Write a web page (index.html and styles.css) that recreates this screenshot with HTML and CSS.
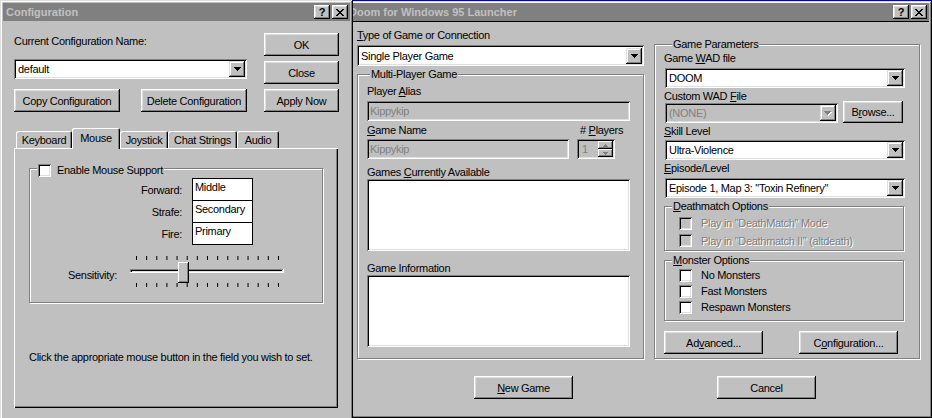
FILE: index.html
```html
<!DOCTYPE html>
<html lang="en">
<head>
  <meta charset="UTF-8">
  <meta name="viewport" content="width=device-width, initial-scale=1.0">
  <title>Doom for Windows 95 Launcher</title>
  <link rel="stylesheet" href="styles.css">
</head>
<body>
<div class="desktop">

  <!-- Launcher (behind) -->
  <div class="window launcher-window">
    <div class="title-bar">
      <span class="title-text launcher-title">Doom for Windows 95 Launcher</span>
      <div class="title-buttons">
        <span class="title-btn help-btn">?</span>
        <span class="title-btn"><svg width="8" height="7" viewBox="0 0 8 7"><path d="M0 0h2v1H0zM6 0h2v1H6zM1 1h2v1H1zM5 1h2v1H5zM2 2h4v1H2zM3 3h2v1H3zM2 4h4v1H2zM1 5h2v1H1zM5 5h2v1H5zM0 6h2v1H0zM6 6h2v1H6z"/></svg></span>
      </div>
    </div>
    <div class="launcher-body">
      <div class="launcher-columns">
        <div class="launcher-left">
          <div class="field-label type-label"><u>T</u>ype of Game or Connection</div>
          <div class="field combo type-combo">
            <span class="combo-text">Single Player Game</span>
            <span class="combo-arrow"><svg width="7" height="4" viewBox="0 0 7 4"><path d="M0 0h7v1H0zM1 1h5v1H1zM2 2h3v1H2zM3 3h1v1H3z"/></svg></span>
          </div>
          <div class="group multi-group">
            <div class="group-title multi-title">Multi-Player Game</div>
            <div class="field-label alias-label">Player <u>A</u>lias</div>
            <div class="field disabled alias-input">Kippykip</div>
            <div class="name-row">
              <div class="name-col">
                <div class="field-label"><u>G</u>ame Name</div>
                <div class="field disabled name-input">Kippykip</div>
              </div>
              <div class="players-col">
                <div class="field-label players-label"># <u>P</u>layers</div>
                <div class="field disabled spinner">
                  <span class="spinner-value">1</span>
                  <span class="spinner-buttons">
                    <span class="spin-btn"><svg width="5" height="3" viewBox="0 0 5 3"><path d="M2 0h1v1h1v1h1v1H0V2h1V1h1z"/></svg></span>
                    <span class="spin-btn"><svg width="5" height="3" viewBox="0 0 5 3"><path d="M0 0h5v1H4v1H3v1H2V2H1V1H0z"/></svg></span>
                  </span>
                </div>
              </div>
            </div>
            <div class="field-label games-label">Games <u>C</u>urrently Available</div>
            <div class="field list-box"></div>
            <div class="field-label info-label">Game Information</div>
            <div class="field list-box"></div>
          </div>
        </div>

        <div class="launcher-right">
          <div class="group params-group">
            <div class="group-title params-title">Game Parameters</div>
            <div class="field-label">Game <u>W</u>AD file</div>
            <div class="field combo param-combo wad-combo">
              <span class="combo-text">DOOM</span>
              <span class="combo-arrow"><svg width="7" height="4" viewBox="0 0 7 4"><path d="M0 0h7v1H0zM1 1h5v1H1zM2 2h3v1H2zM3 3h1v1H3z"/></svg></span>
            </div>
            <div class="field-label custom-label">Custom WAD <u>F</u>ile</div>
            <div class="custom-row">
              <div class="field combo disabled custom-combo">
                <span class="combo-text">(NONE)</span>
                <span class="combo-arrow"><svg width="8" height="5" viewBox="0 0 8 5"><path fill="#fff" d="M1 1h7v1H1zM2 2h5v1H2zM3 3h3v1H3zM4 4h1v1H4z"/><path fill="#808080" d="M0 0h7v1H0zM1 1h5v1H1zM2 2h3v1H2zM3 3h1v1H3z"/></svg></span>
              </div>
              <button class="btn browse-btn">B<u>r</u>owse...</button>
            </div>
            <div class="field-label skill-label"><u>S</u>kill Level</div>
            <div class="field combo param-combo skill-combo">
              <span class="combo-text">Ultra-Violence</span>
              <span class="combo-arrow"><svg width="7" height="4" viewBox="0 0 7 4"><path d="M0 0h7v1H0zM1 1h5v1H1zM2 2h3v1H2zM3 3h1v1H3z"/></svg></span>
            </div>
            <div class="field-label skill-label"><u>E</u>pisode/Level</div>
            <div class="field combo param-combo episode-combo">
              <span class="combo-text">Episode 1, Map 3: "Toxin Refinery"</span>
              <span class="combo-arrow"><svg width="7" height="4" viewBox="0 0 7 4"><path d="M0 0h7v1H0zM1 1h5v1H1zM2 2h3v1H2zM3 3h1v1H3z"/></svg></span>
            </div>

            <div class="group option-group deathmatch-group">
              <div class="group-title"><u>D</u>eathmatch Options</div>
              <div class="check-row dm-row-first">
                <span class="check disabled"></span>
                <span class="disabled-text">Play in "DeathMatch" Mode</span>
              </div>
              <div class="check-row dm-row-second">
                <span class="check disabled"></span>
                <span class="disabled-text">Play in "Deathmatch II" (altdeath)</span>
              </div>
            </div>

            <div class="group option-group monster-group">
              <div class="group-title"><u>M</u>onster Options</div>
              <div class="check-row monster-row"><span class="check"></span><span>No Monsters</span></div>
              <div class="check-row monster-row"><span class="check"></span><span>Fast Monsters</span></div>
              <div class="check-row monster-row"><span class="check"></span><span>Respawn Monsters</span></div>
            </div>

            <div class="param-buttons">
              <button class="btn param-btn">Ad<u>v</u>anced...</button>
              <button class="btn param-btn">C<u>o</u>nfiguration...</button>
            </div>
          </div>
        </div>
      </div>

      <div class="launcher-footer">
        <button class="btn footer-btn"><u>N</u>ew Game</button>
        <button class="btn footer-btn">Cancel</button>
      </div>
    </div>
  </div>

  <!-- Configuration (on top) -->
  <div class="window config-window">
    <div class="title-bar">
      <span class="title-text">Configuration</span>
      <div class="title-buttons">
        <span class="title-btn help-btn">?</span>
        <span class="title-btn"><svg width="8" height="7" viewBox="0 0 8 7"><path d="M0 0h2v1H0zM6 0h2v1H6zM1 1h2v1H1zM5 1h2v1H5zM2 2h4v1H2zM3 3h2v1H3zM2 4h4v1H2zM1 5h2v1H1zM5 5h2v1H5zM0 6h2v1H0zM6 6h2v1H6z"/></svg></span>
      </div>
    </div>
    <div class="config-body">
      <div class="config-top">
        <div class="config-main">
          <div class="config-label">Current Configuration Name:</div>
          <div class="field combo config-combo">
            <span class="combo-text">default</span>
            <span class="combo-arrow"><svg width="7" height="4" viewBox="0 0 7 4"><path d="M0 0h7v1H0zM1 1h5v1H1zM2 2h3v1H2zM3 3h1v1H3z"/></svg></span>
          </div>
          <div class="config-actions">
            <button class="btn wide-btn">Copy Configuration</button>
            <button class="btn wide-btn">Delete Configuration</button>
          </div>
        </div>
        <div class="config-side">
          <button class="btn side-btn">OK</button>
          <button class="btn side-btn">Close</button>
          <button class="btn side-btn">Apply Now</button>
        </div>
      </div>

      <div class="tab-strip">
        <span class="tab tab-keyboard">Keyboard</span>
        <span class="tab tab-mouse selected">Mouse</span>
        <span class="tab tab-joystick">Joystick</span>
        <span class="tab tab-chat">Chat Strings</span>
        <span class="tab tab-audio">Audio</span>
      </div>
      <div class="tab-panel">
        <div class="group mouse-group">
          <div class="group-title mouse-title">
            <span class="check"></span>
            <span>Enable Mouse Support</span>
          </div>
          <div class="mouse-fields">
            <div class="mouse-row"><span class="mouse-label">Forward:</span><span class="mouse-box">Middle</span></div>
            <div class="mouse-row"><span class="mouse-label">Strafe:</span><span class="mouse-box">Secondary</span></div>
            <div class="mouse-row"><span class="mouse-label">Fire:</span><span class="mouse-box">Primary</span></div>
          </div>
          <div class="slider-row">
            <span class="slider-label">Sensitivity:</span>
            <svg class="slider" width="154" height="32" viewBox="0 0 154 32">
              <line x1="6" y1="2" x2="150" y2="2" stroke="#000" stroke-width="4" stroke-dasharray="1 9.14"/>
              <line x1="6" y1="29" x2="150" y2="29" stroke="#000" stroke-width="4" stroke-dasharray="1 9.14"/>
              <rect x="0" y="13" width="154" height="4" fill="#fff"/>
              <rect x="0" y="13" width="153" height="3" fill="#dfdfdf"/>
              <rect x="0" y="13" width="153" height="1" fill="#808080"/>
              <rect x="0" y="13" width="1" height="3" fill="#808080"/>
              <rect x="1" y="14" width="151" height="1" fill="#000"/>
              <rect x="1" y="14" width="1" height="2" fill="#000"/>
              <rect x="48" y="6" width="11" height="21" fill="#000"/>
              <rect x="48" y="6" width="10" height="20" fill="#fff"/>
              <rect x="49" y="7" width="9" height="19" fill="#808080"/>
              <rect x="49" y="7" width="8" height="18" fill="#c0c0c0"/>
            </svg>
          </div>
        </div>
        <p class="mouse-hint">Click the appropriate mouse button in the field you wish to set.</p>
      </div>
    </div>
  </div>

</div>
</body>
</html>
```

FILE: styles.css
```css
body {
    margin: 0;
    background-color: #0000a8;
    font-family: "Liberation Sans", Arial, sans-serif;
    font-size: 11px;
    letter-spacing: -0.3px;
    color: #000;
}

.desktop {
    position: relative;
    width: 932px;
    height: 418px;
    overflow: hidden;
}

/* windows */
.window {
    position: absolute;
    box-sizing: border-box;
    background-color: #c0c0c0;
    padding: 3px;
    box-shadow: inset -1px -1px #000, inset 1px 1px #dfdfdf, inset -2px -2px #808080, inset 2px 2px #fff;
}

.config-window {
    left: 0;
    top: 0;
    width: 353px;
    height: 440px;
    z-index: 2;
}

.launcher-window {
    left: 340px;
    top: 1px;
    width: 592px;
    height: 417px;
    padding-top: 2px;
}

.title-bar {
    height: 18px;
    background-color: #808080;
    display: flex;
    align-items: center;
    justify-content: space-between;
    padding: 0 2px 0 3px;
}

.title-text {
    font-weight: bold;
    color: #c0c0c0;
    letter-spacing: 0;
    white-space: nowrap;
}

.launcher-title {
    margin-left: 3px;
}

.title-buttons {
    display: flex;
    gap: 2px;
}

.title-btn {
    width: 16px;
    height: 14px;
    box-sizing: border-box;
    background-color: #c0c0c0;
    box-shadow: inset -1px -1px #000, inset 1px 1px #fff, inset -2px -2px #808080, inset 2px 2px #dfdfdf;
    display: flex;
    align-items: center;
    justify-content: center;
}

.help-btn {
    font-weight: bold;
    font-size: 11px;
    line-height: 14px;
    letter-spacing: 0;
}

/* common controls */
.btn {
    font: inherit;
    letter-spacing: inherit;
    color: #000;
    background-color: #c0c0c0;
    border: none;
    padding: 0;
    height: 23px;
    box-shadow: inset -1px -1px #000, inset 1px 1px #fff, inset -2px -2px #808080, inset 2px 2px #dfdfdf;
}

.field {
    box-sizing: border-box;
    background-color: #fff;
    box-shadow: inset 1px 1px #808080, inset -1px -1px #fff, inset 2px 2px #000, inset -2px -2px #dfdfdf;
    display: flex;
    align-items: center;
    padding: 0 3px;
    height: 20px;
}

.field.disabled {
    background-color: #c0c0c0;
    color: #808080;
}

.combo {
    padding: 2px;
}

.combo-text {
    flex: 1;
    padding-left: 2px;
    white-space: nowrap;
}

.combo-arrow {
    width: 16px;
    height: 16px;
    box-sizing: border-box;
    background-color: #c0c0c0;
    box-shadow: inset -1px -1px #000, inset 1px 1px #dfdfdf, inset -2px -2px #808080, inset 2px 2px #fff;
    display: flex;
    align-items: center;
    justify-content: center;
}

.field-label {
    line-height: 14px;
    height: 14px;
    white-space: nowrap;
}

.group {
    box-sizing: border-box;
    border: 1px solid #808080;
    box-shadow: inset 1px 1px #fff, 1px 1px #fff;
}

.group-title {
    display: flex;
    align-items: center;
    width: max-content;
    height: 14px;
    line-height: 14px;
    margin: -8px 0 0 7px;
    padding: 0 1px;
    background-color: #c0c0c0;
}

.check {
    width: 13px;
    height: 13px;
    box-sizing: border-box;
    background-color: #fff;
    box-shadow: inset 1px 1px #808080, inset -1px -1px #fff, inset 2px 2px #000, inset -2px -2px #dfdfdf;
}

.check.disabled {
    background-color: #c0c0c0;
}

.disabled-text {
    color: #808080;
    text-shadow: 1px 1px 0 #fff;
}

/* configuration window */
.config-body {
    padding-left: 11px;
}

.config-top {
    margin-top: 12px;
    display: flex;
    gap: 17px;
}

.config-main {
    width: 233px;
}

.config-label {
    height: 26px;
    line-height: 16px;
}

.config-combo {
    width: 233px;
}

.config-actions {
    margin-top: 10px;
    display: flex;
    justify-content: space-between;
}

.wide-btn {
    width: 106px;
}

.config-side {
    display: flex;
    flex-direction: column;
    gap: 5px;
}

.side-btn {
    width: 75px;
}

.tab-strip {
    margin-top: 16px;
    padding-left: 2px;
    height: 20px;
    display: flex;
    align-items: flex-end;
}

.tab {
    height: 17px;
    box-sizing: border-box;
    display: flex;
    align-items: center;
    justify-content: center;
    padding-top: 1px;
    border-radius: 2px 2px 0 0;
    box-shadow: inset 1px 1px #fff, inset -1px 0 #000, inset -2px 0 #808080;
    background-color: #c0c0c0;
}

.tab.selected {
    height: 21px;
    margin-bottom: -1px;
    padding-bottom: 3px;
    position: relative;
    z-index: 1;
}

.tab-keyboard { width: 56px; }
.tab-mouse { width: 48px; }
.tab-joystick { width: 48px; }
.tab-chat { width: 69px; }
.tab-audio { width: 42px; }

.tab-panel {
    width: 324px;
    height: 260px;
    box-sizing: border-box;
    overflow: hidden;
    box-shadow: inset 1px 1px #fff, inset -1px -1px #000, inset -2px -2px #808080;
    padding-top: 20px;
}

.mouse-group {
    margin-left: 15px;
    width: 294px;
    height: 135px;
}

.mouse-title {
    margin-top: -6px;
    gap: 6px;
}

.mouse-fields {
    margin-top: 1px;
}

.mouse-row {
    display: flex;
    align-items: center;
}

.mouse-row + .mouse-row {
    margin-top: -1px;
}

.mouse-label {
    width: 152px;
    margin-right: 10px;
    text-align: right;
}

.mouse-box {
    width: 61px;
    height: 23px;
    box-sizing: border-box;
    border: 1px solid #000;
    background-color: #fff;
    padding: 1px 0 0 2px;
    line-height: 14px;
}

.slider-row {
    margin-top: 11px;
    padding-left: 38px;
    display: flex;
    align-items: flex-start;
    gap: 13px;
}

.slider-label {
    margin-top: 12px;
    line-height: 14px;
}

.slider {
    display: block;
}

.mouse-hint {
    margin: 47px 0 0 15px;
    line-height: 14px;
}

/* launcher window */
.launcher-body {
    border-top: 1px solid #000;
}

.launcher-columns {
    display: flex;
    gap: 10px;
    padding-left: 14px;
}

.launcher-left {
    width: 287px;
}

.type-label {
    margin-top: 6px;
}

.type-combo {
    margin-top: 3px;
    height: 21px;
}

.multi-group {
    margin-top: 8px;
    height: 285px;
    padding-left: 9px;
}

.multi-title {
    margin-left: 3px;
}

.alias-label {
    margin-top: 3px;
}

.alias-input {
    margin-top: 3px;
    width: 263px;
}

.name-row {
    margin-top: 2px;
    display: flex;
}

.name-col {
    width: 202px;
}

.name-input {
    margin-top: 2px;
}

.players-col {
    margin-left: 8px;
}

.players-label {
    padding-left: 3px;
}

.spinner {
    margin-top: 2px;
    width: 38px;
    padding: 2px;
}

.spinner-value {
    flex: 1;
    padding-left: 3px;
}

.spinner-buttons {
    display: flex;
    flex-direction: column;
    height: 16px;
}

.spin-btn {
    width: 15px;
    height: 8px;
    box-sizing: border-box;
    background-color: #c0c0c0;
    box-shadow: inset -1px -1px #000, inset 1px 1px #fff, inset -2px -2px #808080;
    display: flex;
    align-items: center;
    justify-content: center;
    fill: #808080;
}

.games-label {
    margin-top: 6px;
}

.info-label {
    margin-top: 10px;
}

.list-box {
    width: 263px;
    height: 72px;
}

.launcher-right {
    width: 266px;
}

.params-group {
    margin-top: 22px;
    height: 315px;
    padding: 0 13px 0 9px;
}

.params-title {
    margin-left: 8px;
}

.param-combo {
    margin-left: 1px;
    width: 240px;
}

.wad-combo {
    margin-top: 3px;
}

.custom-label {
    margin-top: 1px;
}

.custom-row {
    margin: -2px 0 0 1px;
    display: flex;
    align-items: flex-end;
    gap: 5px;
}

.custom-combo {
    width: 173px;
}

.browse-btn {
    width: 60px;
    height: 22px;
}

.skill-label {
    margin-top: 1px;
}

.skill-combo {
    margin-top: 2px;
}

.episode-combo {
    margin-top: 3px;
}

.option-group {
    width: 240px;
}

.deathmatch-group {
    margin-top: 8px;
    height: 45px;
}

.monster-group {
    margin-top: 9px;
    height: 61px;
}

.check-row {
    display: flex;
    align-items: center;
    gap: 9px;
    padding-left: 14px;
    height: 16px;
}

.dm-row-first {
    margin-top: 1px;
    height: 18px;
}

.dm-row-second {
    height: 17px;
}

.param-buttons {
    margin-top: 10px;
    display: flex;
    gap: 36px;
}

.param-btn {
    width: 99px;
}

.launcher-footer {
    margin-top: 17px;
    padding-left: 131px;
    display: flex;
    gap: 144px;
}

.footer-btn {
    width: 99px;
}
```
